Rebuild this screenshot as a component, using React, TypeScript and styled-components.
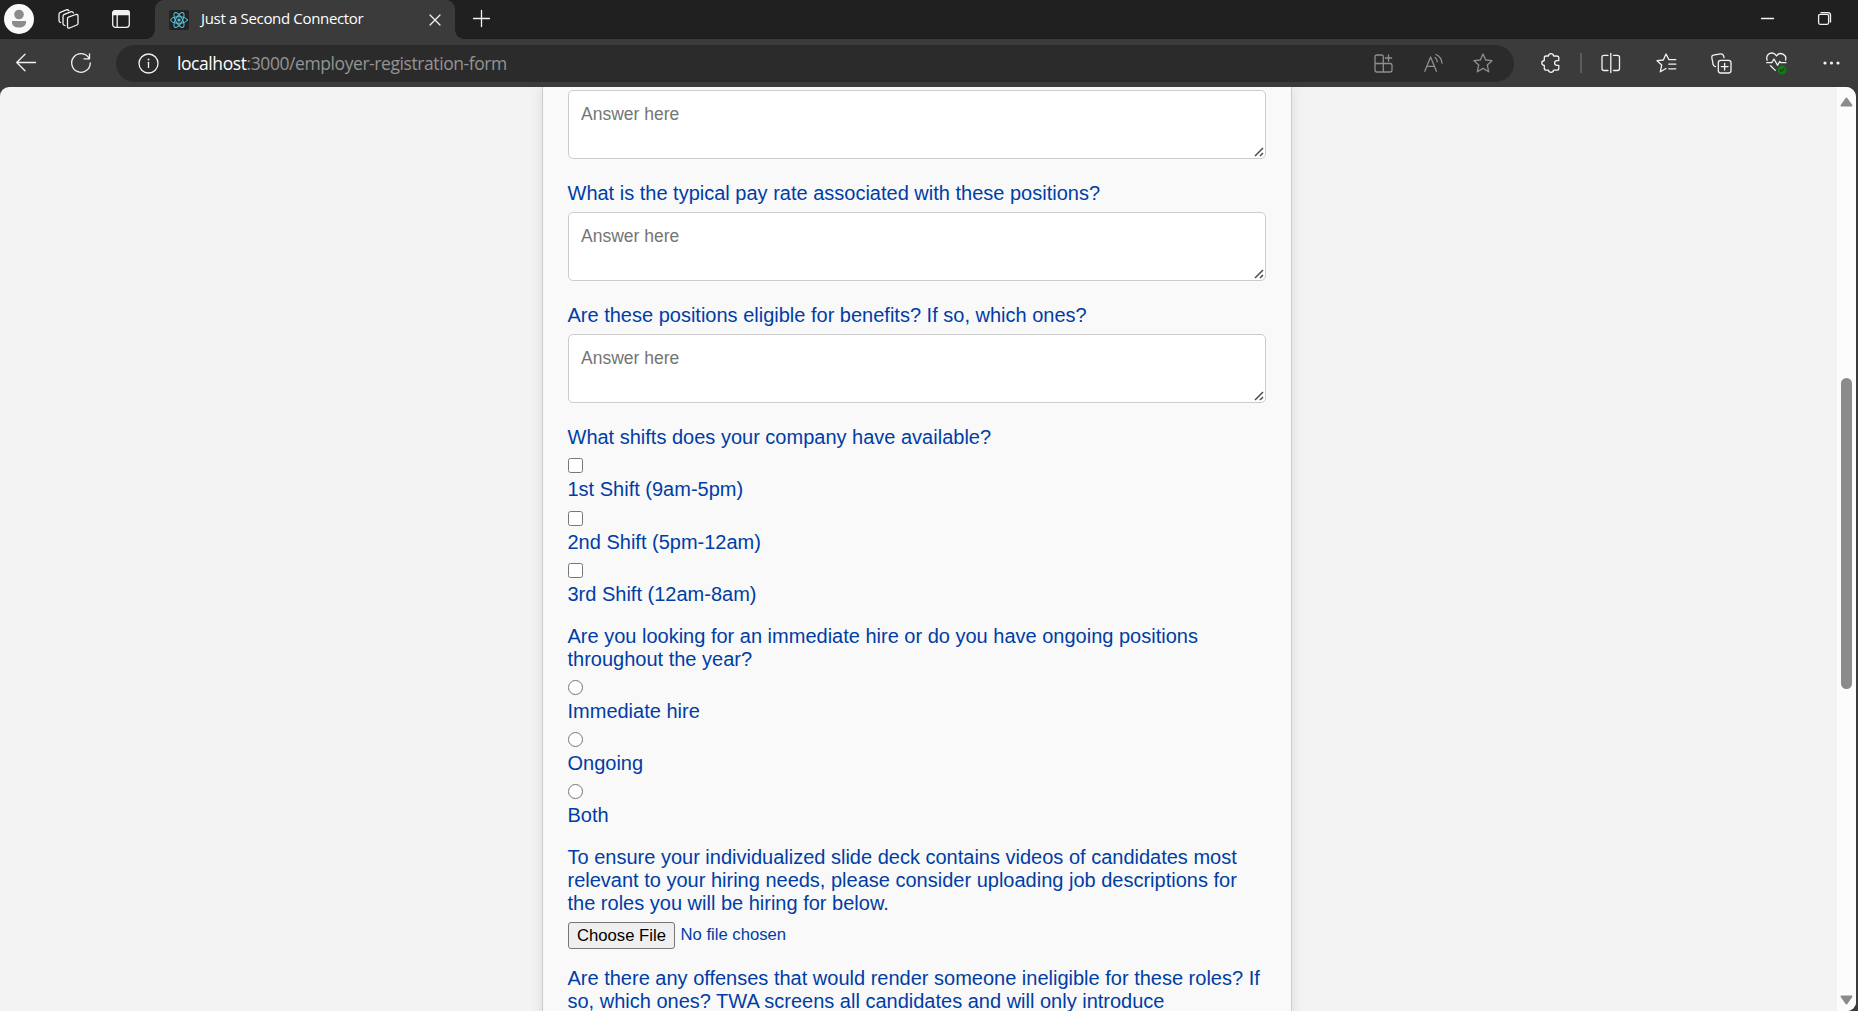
import React from "react";
import styled, { createGlobalStyle } from "styled-components";

const Global = createGlobalStyle`
  * { box-sizing: border-box; }
  html, body { margin: 0; padding: 0; overflow: hidden; }
`;

const Window = styled.div`
  width: 1858px;
  height: 1011px;
  display: flex;
  flex-direction: column;
  background: #3b3b3b;
  overflow: hidden;
  font-family: "Open Sans", "Noto Sans", sans-serif;
`;

const TitleBar = styled.header`
  height: 39px;
  flex: none;
  display: flex;
  align-items: flex-start;
  background: #202020;
  border-bottom: 1px solid #1b1b1b;
`;

const Slot = styled.div<{ $left?: number; $top?: number }>`
  display: flex;
  flex: none;
  margin-left: ${(p) => p.$left ?? 0}px;
  margin-top: ${(p) => p.$top ?? 0}px;
`;

const Icon = styled.svg<{ $tone?: string }>`
  display: block;
  flex: none;
  fill: none;
  stroke: ${(p) => p.$tone ?? "#f2f2f2"};
  stroke-width: 1.3;
  stroke-linecap: round;
  stroke-linejoin: round;
  overflow: visible;
`;

const Tab = styled.div`
  position: relative;
  height: 39px;
  width: 300px;
  margin-left: 25px;
  padding: 0 14px 0 14px;
  display: flex;
  align-items: center;
  background: #3b3b3b;
  border-radius: 9px 9px 0 0;
  &::before,
  &::after {
    content: "";
    position: absolute;
    bottom: 0;
    width: 9px;
    height: 9px;
  }
  &::before {
    left: -9px;
    background: radial-gradient(circle at 0 0, transparent 8.5px, #3b3b3b 9px);
  }
  &::after {
    right: -9px;
    background: radial-gradient(circle at 100% 0, transparent 8.5px, #3b3b3b 9px);
  }
`;

const TabTitle = styled.span`
  flex: 1;
  margin-left: 12px;
  padding-bottom: 3px;
  color: #fff;
  font-size: 15px;
  line-height: 20px;
  letter-spacing: -0.33px;
  white-space: nowrap;
`;

const Spacer = styled.div`
  flex: 1;
`;

const Toolbar = styled.div`
  height: 48px;
  flex: none;
  display: flex;
  align-items: center;
`;

const Address = styled.div`
  width: 1398px;
  height: 37px;
  margin-left: 25px;
  display: flex;
  align-items: center;
  padding: 0 21px 0 22px;
  border-radius: 19px;
  background: #2b2b2b;
`;

const Url = styled.span`
  margin-left: 18px;
  padding-bottom: 1px;
  font-size: 17.5px;
  line-height: 24px;
  letter-spacing: -0.42px;
  color: #949494;
  white-space: nowrap;
`;

const Host = styled.span`
  color: #fff;
`;

const Divider = styled.span`
  width: 2px;
  height: 20px;
  margin-left: 20px;
  background: #5c5c5c;
`;

const Viewport = styled.main`
  flex: 1;
  min-height: 0;
  width: 1856px;
  display: flex;
  background: #f3f3f3;
  border-radius: 9px 10px 9px 0;
  overflow: hidden;
`;

const Page = styled.div`
  flex: 1;
  min-width: 0;
  display: flex;
  justify-content: center;
  padding-right: 3px;
  overflow: hidden;
  font-family: "Liberation Sans", Arial, sans-serif;
`;

const Card = styled.form`
  flex: none;
  width: 750px;
  height: 960px;
  display: flex;
  flex-direction: column;
  padding: 3px 25px 0;
  background: #f9f9f9;
  border: 1px solid #ccc;
  border-top: 0;
  box-shadow: 0 0 12.5px rgba(0, 0, 0, 0.1);
  color: #003da5;
`;

const Field = styled.div<{ $gap: number }>`
  display: flex;
  flex-direction: column;
  align-items: flex-start;
  margin-bottom: ${(p) => p.$gap}px;
`;

const Question = styled.label`
  font-size: 20px;
  line-height: 23px;
  margin: -1px 0 7px -0.5px;
`;

const AnswerBox = styled.div`
  position: relative;
  width: 698px;
  height: 69px;
`;

const Answer = styled.textarea`
  display: block;
  width: 100%;
  height: 100%;
  resize: none;
  margin: 0;
  padding: 13px 12px;
  border: 1px solid #ccc;
  border-radius: 5px;
  background: #fff;
  font: 17.5px/20px "Liberation Sans", Arial, sans-serif;
  &::placeholder {
    color: #757575;
  }
`;

const Grip = styled.svg`
  position: absolute;
  right: 2px;
  bottom: 2px;
  stroke: #4a4a4a;
  stroke-width: 1.5;
`;

const Choice = styled.div<{ $pitch: number }>`
  height: ${(p) => p.$pitch}px;
  display: flex;
  flex-direction: column;
  align-items: flex-start;
`;

const Toggle = styled.input`
  flex: none;
  width: 15px;
  height: 15px;
  margin: 2px 0 5px;
`;

const ChoiceText = styled.label`
  margin-left: -0.5px;
  font-size: 20px;
  line-height: 23px;
`;

const FileRow = styled.div`
  display: flex;
  align-items: flex-start;
  font-size: 16.67px;
`;

const FileButton = styled.button`
  width: 107px;
  height: 27px;
  padding: 0;
  border: 1px solid #767676;
  border-radius: 3px;
  background: #efefef;
  color: #000;
  font: 16.67px/25px "Liberation Sans", Arial, sans-serif;
`;

const FileName = styled.span`
  margin-left: 5.5px;
  line-height: 25px;
`;

const Scrollbar = styled.div`
  width: 19px;
  flex: none;
  display: flex;
  flex-direction: column;
  align-items: center;
  background: #fcfcfc;
  padding: 10px 0 6px;
`;

const Thumb = styled.div`
  width: 11px;
  height: 311px;
  margin-top: 271px;
  border-radius: 6px;
  background: #8b8b8b;
`;

const Arrow = styled.svg`
  display: block;
  fill: #8b8b8b;
  stroke: #8b8b8b;
  stroke-width: 2;
  stroke-linejoin: round;
`;

function TextQuestion({ text }: { text?: string }) {
  return (
    <Field $gap={24}>
      {text && <Question>{text}</Question>}
      <AnswerBox>
        <Answer placeholder="Answer here" />
        <Grip width="10" height="10" viewBox="0 0 10 10">
          <path d="M1 9L9 1M6 9L9 6" />
        </Grip>
      </AnswerBox>
    </Field>
  );
}

function Choices({ type, items, pitch }: { type: string; items: string[]; pitch: number }) {
  return (
    <>
      {items.map((item) => (
        <Choice key={item} $pitch={pitch}>
          <Toggle type={type} name={type} />
          <ChoiceText>{item}</ChoiceText>
        </Choice>
      ))}
    </>
  );
}

const STAR = "M10 1L12.7 7L19 7.7L14.3 12L15.7 18.8L10 15.4L4.3 18.8L5.7 12L1 7.7L7.3 7Z";

export default function App() {
  return (
    <Window>
      <Global />
      <TitleBar>
        <Slot $left={4} $top={4}>
          <Icon width="30" height="30" viewBox="0 0 30 30">
            <circle cx="15" cy="15" r="15" fill="#fafafa" stroke="none" />
            <circle cx="15" cy="10.5" r="4.8" fill="#8c8c8c" stroke="none" />
            <path d="M8 17h14v1.5c0 3-3 5-7 5s-7-2-7-5z" fill="#8c8c8c" stroke="none" />
          </Icon>
        </Slot>
        <Slot $left={24} $top={9}>
          <Icon width="21" height="20" viewBox="0 0 21 20">
            <path d="M10.5 8.2L17.8 5.5Q20 5 20 7V14.2Q20 15.5 18.8 16L11.5 19Q9.5 19.5 9.5 17.8V9.8Q9.5 8.6 10.5 8.2Z" />
            <path d="M7 16.5L6 16.2Q5 15.7 5 14.5V7.5Q5 6 6.3 5.4L12.7 2.8Q14.8 2.2 15.4 4" />
            <path d="M2.6 13.5Q1 13 1 11.5V5.5Q1 4 2.3 3.4L8.3 .9Q10 .4 10.8 1.6" />
          </Icon>
        </Slot>
        <Slot $left={33} $top={10}>
          <Icon width="18" height="18" viewBox="0 0 18 18">
            <rect x=".7" y=".7" width="16.6" height="16.6" rx="2.8" />
            <path d="M.7 4.5V3A2.3 2.3 0 0 1 3 .7H15A2.3 2.3 0 0 1 17.3 3V4.5Z" fill="#f2f2f2" />
            <path d="M5.2 5V17" />
          </Icon>
        </Slot>
        <Tab>
          <Icon width="20" height="20" viewBox="0 0 20 20" $tone="#58c4dc">
            <rect width="20" height="20" rx="2" fill="#222" stroke="none" />
            <g strokeWidth="1">
              <ellipse cx="10" cy="10" rx="8.4" ry="3.3" />
              <ellipse cx="10" cy="10" rx="8.4" ry="3.3" transform="rotate(60 10 10)" />
              <ellipse cx="10" cy="10" rx="8.4" ry="3.3" transform="rotate(120 10 10)" />
            </g>
            <circle cx="10" cy="10" r="1.6" fill="#58c4dc" stroke="none" />
          </Icon>
          <TabTitle>Just a Second Connector</TabTitle>
          <Icon width="12" height="12" viewBox="0 0 12 12">
            <path d="M1 1L11 11M11 1L1 11" />
          </Icon>
        </Tab>
        <Slot $left={18} $top={10}>
          <Icon width="17" height="17" viewBox="0 0 17 17">
            <path d="M8.5 .5V16.5M.5 8.5H16.5" />
          </Icon>
        </Slot>
        <Spacer />
        <Slot $top={18}>
          <Icon width="13" height="2" viewBox="0 0 13 2">
            <path d="M.5 .5H12.5" />
          </Icon>
        </Slot>
        <Slot $left={44} $top={12}>
          <Icon width="13" height="13" viewBox="0 0 13 13">
            <rect x=".6" y="2.3" width="10" height="10" rx="1.5" />
            <path d="M3 .6H10Q12.5 .6 12.5 3V10" />
          </Icon>
        </Slot>
        <Slot $left={27} />
      </TitleBar>

      <Toolbar>
        <Slot $left={16}>
          <Icon width="20" height="18" viewBox="0 0 20 18">
            <path d="M19.5 8.5H.7M9 .3L.7 8.5L9 16.8" />
          </Icon>
        </Slot>
        <Slot $left={35}>
          <Icon width="20" height="20" viewBox="0 0 20 20">
            <path d="M18 5.2A9.3 9.3 0 1 0 19.3 10M18.5 .8V5.8H13" />
          </Icon>
        </Slot>
        <Address>
          <Icon width="21" height="21" viewBox="0 0 21 21">
            <circle cx="10.5" cy="10.5" r="9.5" />
            <path d="M10.5 9.3V14.5" />
            <circle cx="10.5" cy="6.5" r=".9" fill="#f2f2f2" stroke="none" />
          </Icon>
          <Url>
            <Host>localhost</Host>:3000/employer-registration-form
          </Url>
          <Spacer />
          <Icon width="19" height="19" viewBox="0 0 19 19" $tone="#8e8e8e">
            <path d="M9.3 9.5V3Q9.3 1 7.5 1H3Q1 1 1 3V16Q1 18 3 18H16Q18 18 18 16V11.5Q18 9.5 16 9.5H1M9.3 9.5V18M14.5 .8V7.2M11.3 4H17.7" />
          </Icon>
          <Slot $left={31}>
            <Icon width="19" height="18" viewBox="0 0 19 18" $tone="#8e8e8e">
              <path d="M.8 17.3L6.6 3L12.4 17.3M2.8 12.3H10.5M11 3.5Q13 5 13.2 7.8M12 .5Q17.5 3 18 9.2" />
            </Icon>
          </Slot>
          <Slot $left={30}>
            <Icon width="20" height="20" viewBox="0 0 20 20" $tone="#8e8e8e">
              <path d={STAR} />
            </Icon>
          </Slot>
        </Address>
        <Slot $left={26.5}>
          <Icon width="19" height="20" viewBox="0 0 19 20">
            <path d="M5 3H7.4Q7.8 .7 10 .7T12.6 3H15.6Q17.8 3 17.8 5V7.6H16A2.3 2.3 0 0 0 16 12.4H17.8V15.2Q17.8 17.2 15.6 17.2H12.6Q12.2 19.4 10 19.4T7.4 17.2H5.3Q3.3 17.2 3.3 15.2V12.5Q.8 12 .8 10T3.3 7.5V5Q3.3 3 5 3Z" />
          </Icon>
        </Slot>
        <Divider />
        <Slot $left={19}>
          <Icon width="20" height="20" viewBox="0 0 20 20">
            <path d="M7 2.3H3Q1 2.3 1 4.3V15.5Q1 17.5 3 17.5H7M12.5 2.3H16.5Q18.5 2.3 18.5 4.3V15.5Q18.5 17.5 16.5 17.5H12.5M9.8 .5V19.5" />
          </Icon>
        </Slot>
        <Slot $left={35}>
          <Icon width="21" height="20" viewBox="0 0 21 20">
            <path d="M19.8 6.7H13L10 1L7.3 7L1 7.7L5.7 12L4.3 18.8L10 15.5M12.8 11.2H19.8M12.8 15.8H19.8" />
          </Icon>
        </Slot>
        <Slot $left={34}>
          <Icon width="21" height="21" viewBox="0 0 21 21">
            <rect x="7.3" y="7.3" width="12.7" height="12.7" rx="2.5" />
            <path d="M13.6 10.3V17M10.3 13.6H17M4.5 13.7Q2.8 13.5 2.2 11.8L.8 4.5Q.6 2.7 2.3 2.2L9.5 .8Q11.8 .6 12.6 2.8L13 4.5" />
          </Icon>
        </Slot>
        <Slot $left={34}>
          <Icon width="21" height="20" viewBox="0 0 21 20">
            <path d="M1.2 7.2A5 5 0 0 1 10.5 3A5 5 0 0 1 19.5 7.2M.7 9.7H5.8L8 6L11.5 12.3L13.7 8.5L15 9.7H20M4.5 12.8L9.3 17.4" />
            <circle cx="16" cy="17" r="4.5" fill="#107c10" stroke="none" />
            <path d="M14 17L15.5 18.4L18 15.8" stroke="#333" />
          </Icon>
        </Slot>
        <Slot $left={36}>
          <Icon width="17" height="4" viewBox="0 0 17 4">
            <g fill="#f2f2f2" stroke="none">
              <circle cx="2" cy="2" r="1.6" />
              <circle cx="8.5" cy="2" r="1.6" />
              <circle cx="15" cy="2" r="1.6" />
            </g>
          </Icon>
        </Slot>
      </Toolbar>

      <Viewport>
        <Page>
          <Card>
            <TextQuestion />
            <TextQuestion text="What is the typical pay rate associated with these positions?" />
            <TextQuestion text="Are these positions eligible for benefits? If so, which ones?" />
            <Field $gap={12.5}>
              <Question>What shifts does your company have available?</Question>
              <Choices
                type="checkbox"
                pitch={52.5}
                items={["1st Shift (9am-5pm)", "2nd Shift (5pm-12am)", "3rd Shift (12am-8am)"]}
              />
            </Field>
            <Field $gap={13}>
              <Question>
                Are you looking for an immediate hire or do you have ongoing positions throughout the year?
              </Question>
              <Choices type="radio" pitch={52} items={["Immediate hire", "Ongoing", "Both"]} />
            </Field>
            <Field $gap={19}>
              <Question>
                To ensure your individualized slide deck contains videos of candidates most relevant to your hiring
                needs, please consider uploading job descriptions for the roles you will be hiring for below.
              </Question>
              <FileRow>
                <FileButton type="button">Choose File</FileButton>
                <FileName>No file chosen</FileName>
              </FileRow>
            </Field>
            <Field $gap={0}>
              <Question>
                Are there any offenses that would render someone ineligible for these roles? If so, which ones? TWA
                screens all candidates and will only introduce
              </Question>
            </Field>
          </Card>
        </Page>
        <Scrollbar>
          <Arrow width="13" height="10" viewBox="0 0 13 10">
            <path d="M6.5 1.5L11.5 8.5H1.5Z" />
          </Arrow>
          <Thumb />
          <Spacer />
          <Arrow width="13" height="10" viewBox="0 0 13 10">
            <path d="M6.5 8.5L11.5 1.5H1.5Z" />
          </Arrow>
        </Scrollbar>
      </Viewport>
    </Window>
  );
}
